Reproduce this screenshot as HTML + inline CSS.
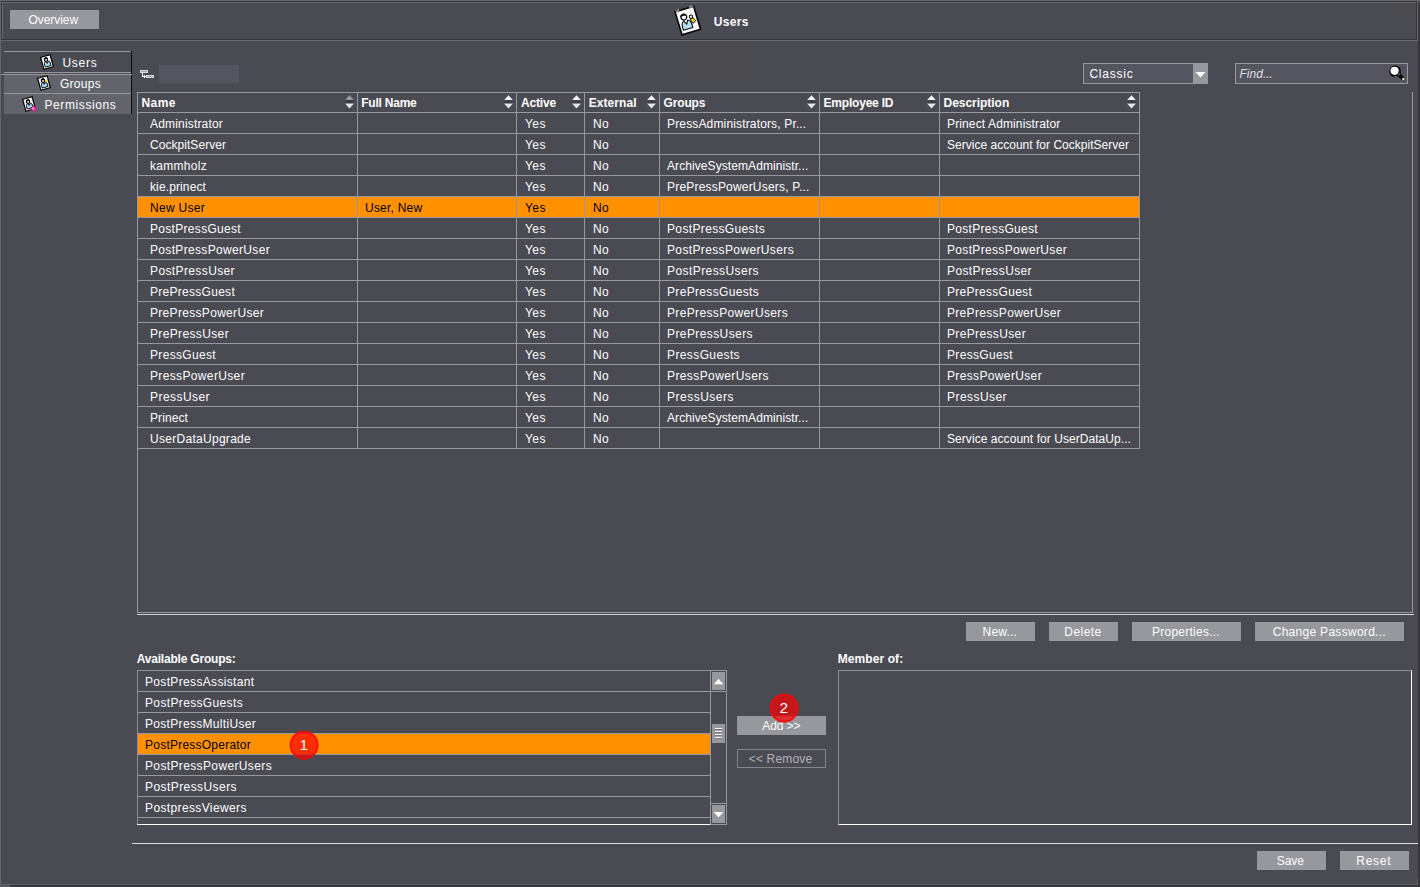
<!DOCTYPE html>
<html>
<head>
<meta charset="utf-8">
<title>Users</title>
<style>
html,body{margin:0;padding:0;}
body{width:1420px;height:887px;overflow:hidden;background:#4a4a53;font-family:"Liberation Sans",Arial,sans-serif;font-size:12px;color:#fff;position:relative;}
.a{position:absolute;}
.t{position:absolute;white-space:nowrap;line-height:14px;height:14px;}
.b{font-weight:bold;}
.btn{position:absolute;background:#96989d;height:19px;}
.hl{position:absolute;height:1px;background:#98999f;}
.vl{position:absolute;width:1px;background:#98999f;}
.sel{position:absolute;background:#ff9100;}
.k{color:#000;}
</style>
</head>
<body>

<div class="a" style="left:0;top:0;width:1420px;height:1px;background:#68686f"></div>
<div class="a" style="left:0;top:0;width:1px;height:887px;background:#66666e"></div>
<div class="a" style="left:1418px;top:3px;width:2px;height:884px;background:#36363b"></div>
<div class="a" style="left:0;top:884px;width:1418px;height:1px;background:#606069"></div>
<div class="a" style="left:1417px;top:879px;width:1px;height:6px;background:#606069"></div>
<div class="a" style="left:0;top:885px;width:10px;height:2px;background:#5a5a62"></div>
<div class="a" style="left:10px;top:885px;width:1410px;height:1px;background:#333338"></div>
<div class="a" style="left:10px;top:886px;width:1410px;height:1px;background:#3a3a3e"></div>
<div class="a" style="left:1px;top:1px;width:1416px;height:39px;border:1px solid #333338;box-sizing:border-box;"></div>
<div class="a" style="left:2px;top:2px;width:1414px;height:37px;border-left:1px solid #696973;border-top:1px solid #696973;box-sizing:border-box;"></div>
<div class="a" style="left:1417px;top:1px;width:1px;height:40px;background:#696973"></div>
<div class="a" style="left:0;top:40px;width:1418px;height:1px;background:#696973"></div>
<div class="a" style="left:1391px;top:3px;width:25px;height:14px;background:#4b4b4d"></div>
<div class="a" style="left:687px;top:41px;width:63px;height:40px;background:#4b4b4f"></div>
<div class="btn" style="left:10px;top:10px;width:89px;height:19px;"><span class="t" style="left:18.53px;top:3px;letter-spacing:-0.067px;">Overview</span></div>
<svg class="a" style="left:670px;top:3px" width="36" height="36" viewBox="0 0 36 36">
 <g transform="translate(17.8 17.6) rotate(-16.9)">
  <rect x="-9.7" y="-12" width="19.4" height="24" fill="#fff" stroke="#0a0a0a" stroke-width="1.7"/>
  <path d="M-8.4 -11.2 v-2 h2.8 v2 M5.6 -11.2 v-2 h2.8 v2" fill="#fff" stroke="#fff" stroke-width=".4"/>
  <path d="M-7.7 -11 v-2.6 M-6.3 -11 v-2.6 M6.3 -11 v-2.6 M7.7 -11 v-2.6" stroke="#0a0a0a" stroke-width=".7"/>
  <path d="M-6.8 8 q-.9 -8.2 3 -8.4 l1.8 3.4 l1.8 -3.4 q3.8 .2 3 8.4 z" fill="#b2dff5" stroke="#0a0a0a" stroke-width="1.1" stroke-linejoin="round"/>
  <circle cx="-2.8" cy="-4.5" r="2.9" fill="#fff" stroke="#0a0a0a" stroke-width="1.3"/>
  <path d="M-6 -5.2 a3.3 3.3 0 0 1 6.4 0 q-3.2 -1.6 -6.4 0 z" fill="#0a0a0a"/>
  <path d="M2.7 -.6 l3.2 -.6 l1.6 3.6 l-3 1.8 z" fill="#f5d800" stroke="#0a0a0a" stroke-width=".9" stroke-linejoin="round"/>
  <circle cx="4.2" cy="-2.8" r="1.7" fill="#fff" stroke="#0a0a0a" stroke-width="1"/>
 </g>
</svg>
<div class="t b" style="left:713.68px;top:15px;letter-spacing:0.364px;">Users</div>
<div class="hl" style="left:4px;top:51px;width:127px;"></div>
<div class="hl" style="left:4px;top:72px;width:127px;"></div>
<div class="a" style="left:4px;top:75px;width:127px;height:39px;background:#63636c;"></div>
<div class="hl" style="left:4px;top:93px;width:127px;"></div>
<div class="a" style="left:131px;top:51px;width:1px;height:63px;background:#0c0c0e;"></div>
<div class="hl" style="left:1px;top:74px;width:131px;"></div>
<svg class="a" style="left:38px;top:53px" width="18" height="18" viewBox="-9 -9 18 18">
 <g transform="rotate(-15.5)">
  <rect x="-4.9" y="-6.2" width="9.8" height="12.4" fill="#fff" stroke="#0a0a0a" stroke-width="1.3"/>
  <path d="M-3 4.4 q-.4 -5 1.6 -5 l1.4 2 l1.4 -2 q2 0 1.6 5 z" fill="#a6dcf4" stroke="#0a0a0a" stroke-width=".9"/>
  <circle cx="-0.4" cy="-2.5" r="1.7" fill="#fff" stroke="#0a0a0a" stroke-width="1.2"/>
  <path d="M-2.3 -3 a1.9 1.9 0 0 1 3.8 0 z" fill="#0a0a0a"/>
  
 </g>
</svg>
<svg class="a" style="left:35px;top:74px" width="18" height="18" viewBox="-9 -9 18 18">
 <g transform="rotate(-15.5)">
  <rect x="-4.9" y="-6.2" width="9.8" height="12.4" fill="#fff" stroke="#0a0a0a" stroke-width="1.3"/>
  <path d="M-3 4.4 q-.4 -5 1.6 -5 l1.4 2 l1.4 -2 q2 0 1.6 5 z" fill="#a6dcf4" stroke="#0a0a0a" stroke-width=".9"/>
  <circle cx="-0.4" cy="-2.5" r="1.7" fill="#fff" stroke="#0a0a0a" stroke-width="1.2"/>
  <path d="M-2.3 -3 a1.9 1.9 0 0 1 3.8 0 z" fill="#0a0a0a"/>
  <circle cx="3" cy="-1.4" r="1.1" fill="#f5d800"/>
 </g>
</svg>
<svg class="a" style="left:20px;top:95px" width="18" height="18" viewBox="-9 -9 18 18">
 <g transform="rotate(-15.5)">
  <rect x="-4.9" y="-6.2" width="9.8" height="12.4" fill="#fff" stroke="#0a0a0a" stroke-width="1.3"/>
  <path d="M-3 4.4 q-.4 -5 1.6 -5 l1.4 2 l1.4 -2 q2 0 1.6 5 z" fill="#a6dcf4" stroke="#0a0a0a" stroke-width=".9"/>
  <circle cx="-0.4" cy="-2.5" r="1.7" fill="#fff" stroke="#0a0a0a" stroke-width="1.2"/>
  <path d="M-2.3 -3 a1.9 1.9 0 0 1 3.8 0 z" fill="#0a0a0a"/>
  
 </g>
</svg>
<svg class="a" style="left:30px;top:105px" width="8" height="8" viewBox="0 0 8 8"><circle cx="3.6" cy="3.7" r="2.5" fill="#e832a0" stroke="#b01878" stroke-width=".6"/><circle cx="3.2" cy="3.4" r="1" fill="#f8b0d8"/></svg>
<div class="t" style="left:62.47px;top:56px;letter-spacing:0.731px;">Users</div>
<div class="t" style="left:59.9px;top:77px;letter-spacing:0.297px;">Groups</div>
<div class="t" style="left:44.42px;top:98px;letter-spacing:0.607px;">Permissions</div>
<div class="a" style="left:159px;top:65px;width:80px;height:18px;background:#55555f;"></div>
<svg class="a" style="left:140px;top:70px" width="15" height="9" viewBox="0 0 15 9" shape-rendering="crispEdges">
 <rect x="0" y="0" width="8" height="3" fill="#d8d9dd"/><rect x="1" y="1" width="6" height="1" fill="#a9a9ae"/>
 <rect x="6" y="5" width="8" height="3" fill="#d8d9dd"/><rect x="7" y="6" width="6" height="1" fill="#a9a9ae"/>
 <rect x="2" y="3" width="1" height="4" fill="#fff"/><rect x="2" y="6" width="4" height="1" fill="#fff"/><rect x="4" y="5" width="1" height="3" fill="#fff"/>
</svg>
<div class="a" style="left:1083px;top:63px;width:125px;height:21px;border:1px solid #98999f;box-sizing:border-box;background:#55555f;"></div>
<div class="t" style="left:1089.39px;top:67px;letter-spacing:0.792px;">Classic</div>
<div class="a" style="left:1193px;top:64px;width:15px;height:20px;background:#96989d;"></div>
<svg class="a" style="left:1195px;top:71px" width="11" height="7" viewBox="0 0 11 7"><path d="M0.5 1 H10.5 L5.5 6.4 Z" fill="#fff"/></svg>
<div class="a" style="left:1235px;top:63px;width:173px;height:21px;border:1px solid #98999f;box-sizing:border-box;background:#55555f;"></div>
<div class="t" style="left:1239.53px;top:67px;letter-spacing:0.016px;font-style:italic;color:#dedee0;">Find...</div>
<svg class="a" style="left:1388px;top:64px" width="18" height="18" viewBox="0 0 18 18">
 <path d="M10.6 10.8 L14.6 14.2" stroke="#000" stroke-width="3.6" stroke-linecap="round"/>
 <circle cx="7.2" cy="7.4" r="5.8" fill="#000"/>
 <path d="M6.6 12.4 a5 5 0 0 0 5.6 -5" stroke="#5e97ad" stroke-width="1.1" fill="none" stroke-dasharray="2.2 1.6"/>
 <circle cx="6.6" cy="6.85" r="4.1" fill="#fff"/>
 <circle cx="15.3" cy="14.9" r="1.1" fill="#fff"/>
</svg>
<div class="vl" style="left:1412px;top:92px;height:521px;"></div>
<div class="vl" style="left:137px;top:448px;height:165px;"></div>
<div class="hl" style="left:137px;top:612px;width:1276px;"></div>
<div class="hl" style="left:137px;top:614px;width:1277px;background:#d4d4d8;"></div>
<div class="sel" style="left:138px;top:197px;width:1001px;height:20px;"></div>
<div class="t b" style="left:141.5px;top:96px;letter-spacing:0.41px;">Name</div>
<svg class="a" style="left:345px;top:95px" width="9" height="14" viewBox="0 0 9 14"><path d="M0 5.3 L4.5 0.3 L9 5.3 Z" fill="#9a9aa0"/><path d="M0.2 5.75 H8.8" stroke="#2a2a30" stroke-width="1"/><path d="M0.2 8 H8.8" stroke="#2a2a30" stroke-width="1"/><path d="M0 8.5 L4.5 13.6 L9 8.5 Z" fill="#e4e6f2"/></svg>
<div class="t b" style="left:361.2px;top:96px;letter-spacing:-0.217px;">Full Name</div>
<svg class="a" style="left:504px;top:95px" width="9" height="14" viewBox="0 0 9 14"><path d="M0 5.3 L4.5 0.3 L9 5.3 Z" fill="#f4f4f8"/><path d="M0.2 5.75 H8.8" stroke="#2a2a30" stroke-width="1"/><path d="M0.2 8 H8.8" stroke="#2a2a30" stroke-width="1"/><path d="M0 8.5 L4.5 13.6 L9 8.5 Z" fill="#e4e6f2"/></svg>
<div class="t b" style="left:520.95px;top:96px;letter-spacing:-0.162px;">Active</div>
<svg class="a" style="left:572px;top:95px" width="9" height="14" viewBox="0 0 9 14"><path d="M0 5.3 L4.5 0.3 L9 5.3 Z" fill="#f4f4f8"/><path d="M0.2 5.75 H8.8" stroke="#2a2a30" stroke-width="1"/><path d="M0.2 8 H8.8" stroke="#2a2a30" stroke-width="1"/><path d="M0 8.5 L4.5 13.6 L9 8.5 Z" fill="#e4e6f2"/></svg>
<div class="t b" style="left:588.7px;top:96px;letter-spacing:0.071px;">External</div>
<svg class="a" style="left:647px;top:95px" width="9" height="14" viewBox="0 0 9 14"><path d="M0 5.3 L4.5 0.3 L9 5.3 Z" fill="#f4f4f8"/><path d="M0.2 5.75 H8.8" stroke="#2a2a30" stroke-width="1"/><path d="M0.2 8 H8.8" stroke="#2a2a30" stroke-width="1"/><path d="M0 8.5 L4.5 13.6 L9 8.5 Z" fill="#e4e6f2"/></svg>
<div class="t b" style="left:663.51px;top:96px;letter-spacing:-0.137px;">Groups</div>
<svg class="a" style="left:807px;top:95px" width="9" height="14" viewBox="0 0 9 14"><path d="M0 5.3 L4.5 0.3 L9 5.3 Z" fill="#f4f4f8"/><path d="M0.2 5.75 H8.8" stroke="#2a2a30" stroke-width="1"/><path d="M0.2 8 H8.8" stroke="#2a2a30" stroke-width="1"/><path d="M0 8.5 L4.5 13.6 L9 8.5 Z" fill="#e4e6f2"/></svg>
<div class="t b" style="left:823.5px;top:96px;letter-spacing:-0.202px;">Employee ID</div>
<svg class="a" style="left:927px;top:95px" width="9" height="14" viewBox="0 0 9 14"><path d="M0 5.3 L4.5 0.3 L9 5.3 Z" fill="#f4f4f8"/><path d="M0.2 5.75 H8.8" stroke="#2a2a30" stroke-width="1"/><path d="M0.2 8 H8.8" stroke="#2a2a30" stroke-width="1"/><path d="M0 8.5 L4.5 13.6 L9 8.5 Z" fill="#e4e6f2"/></svg>
<div class="t b" style="left:943.5px;top:96px;letter-spacing:-0.026px;">Description</div>
<svg class="a" style="left:1127px;top:95px" width="9" height="14" viewBox="0 0 9 14"><path d="M0 5.3 L4.5 0.3 L9 5.3 Z" fill="#f4f4f8"/><path d="M0.2 5.75 H8.8" stroke="#2a2a30" stroke-width="1"/><path d="M0.2 8 H8.8" stroke="#2a2a30" stroke-width="1"/><path d="M0 8.5 L4.5 13.6 L9 8.5 Z" fill="#e4e6f2"/></svg>
<div class="t" style="left:150px;top:117px;letter-spacing:0.178px;">Administrator</div>
<div class="t" style="left:525px;top:117px;letter-spacing:0.441px;">Yes</div>
<div class="t" style="left:593px;top:117px;letter-spacing:0.33px;">No</div>
<div class="t" style="left:667px;top:117px;letter-spacing:0.153px;">PressAdministrators, Pr...</div>
<div class="t" style="left:947px;top:117px;letter-spacing:0.125px;">Prinect Administrator</div>
<div class="t" style="left:150px;top:138px;letter-spacing:0.049px;">CockpitServer</div>
<div class="t" style="left:525px;top:138px;letter-spacing:0.441px;">Yes</div>
<div class="t" style="left:593px;top:138px;letter-spacing:0.33px;">No</div>
<div class="t" style="left:947px;top:138px;letter-spacing:0.018px;">Service account for CockpitServer</div>
<div class="t" style="left:150px;top:159px;letter-spacing:0.29px;">kammholz</div>
<div class="t" style="left:525px;top:159px;letter-spacing:0.441px;">Yes</div>
<div class="t" style="left:593px;top:159px;letter-spacing:0.33px;">No</div>
<div class="t" style="left:667px;top:159px;letter-spacing:0.079px;">ArchiveSystemAdministr...</div>
<div class="t" style="left:150px;top:180px;letter-spacing:0.119px;">kie.prinect</div>
<div class="t" style="left:525px;top:180px;letter-spacing:0.441px;">Yes</div>
<div class="t" style="left:593px;top:180px;letter-spacing:0.33px;">No</div>
<div class="t" style="left:667px;top:180px;letter-spacing:0.193px;">PrePressPowerUsers, P...</div>
<div class="t k" style="left:150px;top:201px;letter-spacing:0.291px;">New User</div>
<div class="t k" style="left:365px;top:201px;letter-spacing:0.221px;">User, New</div>
<div class="t k" style="left:525px;top:201px;letter-spacing:0.441px;">Yes</div>
<div class="t k" style="left:593px;top:201px;letter-spacing:0.33px;">No</div>
<div class="t" style="left:150px;top:222px;letter-spacing:0.307px;">PostPressGuest</div>
<div class="t" style="left:525px;top:222px;letter-spacing:0.441px;">Yes</div>
<div class="t" style="left:593px;top:222px;letter-spacing:0.33px;">No</div>
<div class="t" style="left:667px;top:222px;letter-spacing:0.353px;">PostPressGuests</div>
<div class="t" style="left:947px;top:222px;letter-spacing:0.307px;">PostPressGuest</div>
<div class="t" style="left:150px;top:243px;letter-spacing:0.331px;">PostPressPowerUser</div>
<div class="t" style="left:525px;top:243px;letter-spacing:0.441px;">Yes</div>
<div class="t" style="left:593px;top:243px;letter-spacing:0.33px;">No</div>
<div class="t" style="left:667px;top:243px;letter-spacing:0.367px;">PostPressPowerUsers</div>
<div class="t" style="left:947px;top:243px;letter-spacing:0.331px;">PostPressPowerUser</div>
<div class="t" style="left:150px;top:264px;letter-spacing:0.383px;">PostPressUser</div>
<div class="t" style="left:525px;top:264px;letter-spacing:0.441px;">Yes</div>
<div class="t" style="left:593px;top:264px;letter-spacing:0.33px;">No</div>
<div class="t" style="left:667px;top:264px;letter-spacing:0.427px;">PostPressUsers</div>
<div class="t" style="left:947px;top:264px;letter-spacing:0.383px;">PostPressUser</div>
<div class="t" style="left:150px;top:285px;letter-spacing:0.28px;">PrePressGuest</div>
<div class="t" style="left:525px;top:285px;letter-spacing:0.441px;">Yes</div>
<div class="t" style="left:593px;top:285px;letter-spacing:0.33px;">No</div>
<div class="t" style="left:667px;top:285px;letter-spacing:0.331px;">PrePressGuests</div>
<div class="t" style="left:947px;top:285px;letter-spacing:0.28px;">PrePressGuest</div>
<div class="t" style="left:150px;top:306px;letter-spacing:0.312px;">PrePressPowerUser</div>
<div class="t" style="left:525px;top:306px;letter-spacing:0.441px;">Yes</div>
<div class="t" style="left:593px;top:306px;letter-spacing:0.33px;">No</div>
<div class="t" style="left:667px;top:306px;letter-spacing:0.35px;">PrePressPowerUsers</div>
<div class="t" style="left:947px;top:306px;letter-spacing:0.312px;">PrePressPowerUser</div>
<div class="t" style="left:150px;top:327px;letter-spacing:0.36px;">PrePressUser</div>
<div class="t" style="left:525px;top:327px;letter-spacing:0.441px;">Yes</div>
<div class="t" style="left:593px;top:327px;letter-spacing:0.33px;">No</div>
<div class="t" style="left:667px;top:327px;letter-spacing:0.409px;">PrePressUsers</div>
<div class="t" style="left:947px;top:327px;letter-spacing:0.36px;">PrePressUser</div>
<div class="t" style="left:150px;top:348px;letter-spacing:0.331px;">PressGuest</div>
<div class="t" style="left:525px;top:348px;letter-spacing:0.441px;">Yes</div>
<div class="t" style="left:593px;top:348px;letter-spacing:0.33px;">No</div>
<div class="t" style="left:667px;top:348px;letter-spacing:0.392px;">PressGuests</div>
<div class="t" style="left:947px;top:348px;letter-spacing:0.331px;">PressGuest</div>
<div class="t" style="left:150px;top:369px;letter-spacing:0.355px;">PressPowerUser</div>
<div class="t" style="left:525px;top:369px;letter-spacing:0.441px;">Yes</div>
<div class="t" style="left:593px;top:369px;letter-spacing:0.33px;">No</div>
<div class="t" style="left:667px;top:369px;letter-spacing:0.398px;">PressPowerUsers</div>
<div class="t" style="left:947px;top:369px;letter-spacing:0.355px;">PressPowerUser</div>
<div class="t" style="left:150px;top:390px;letter-spacing:0.443px;">PressUser</div>
<div class="t" style="left:525px;top:390px;letter-spacing:0.441px;">Yes</div>
<div class="t" style="left:593px;top:390px;letter-spacing:0.33px;">No</div>
<div class="t" style="left:667px;top:390px;letter-spacing:0.499px;">PressUsers</div>
<div class="t" style="left:947px;top:390px;letter-spacing:0.443px;">PressUser</div>
<div class="t" style="left:150px;top:411px;letter-spacing:0.093px;">Prinect</div>
<div class="t" style="left:525px;top:411px;letter-spacing:0.441px;">Yes</div>
<div class="t" style="left:593px;top:411px;letter-spacing:0.33px;">No</div>
<div class="t" style="left:667px;top:411px;letter-spacing:0.079px;">ArchiveSystemAdministr...</div>
<div class="t" style="left:150px;top:432px;letter-spacing:0.286px;">UserDataUpgrade</div>
<div class="t" style="left:525px;top:432px;letter-spacing:0.441px;">Yes</div>
<div class="t" style="left:593px;top:432px;letter-spacing:0.33px;">No</div>
<div class="t" style="left:947px;top:432px;letter-spacing:0.058px;">Service account for UserDataUp...</div>
<div class="hl" style="left:137px;top:92px;width:1003px"></div>
<div class="hl" style="left:137px;top:112px;width:1003px"></div>
<div class="hl" style="left:137px;top:133px;width:1003px"></div>
<div class="hl" style="left:137px;top:154px;width:1003px"></div>
<div class="hl" style="left:137px;top:175px;width:1003px"></div>
<div class="hl" style="left:137px;top:196px;width:1003px"></div>
<div class="hl" style="left:137px;top:217px;width:1003px"></div>
<div class="hl" style="left:137px;top:238px;width:1003px"></div>
<div class="hl" style="left:137px;top:259px;width:1003px"></div>
<div class="hl" style="left:137px;top:280px;width:1003px"></div>
<div class="hl" style="left:137px;top:301px;width:1003px"></div>
<div class="hl" style="left:137px;top:322px;width:1003px"></div>
<div class="hl" style="left:137px;top:343px;width:1003px"></div>
<div class="hl" style="left:137px;top:364px;width:1003px"></div>
<div class="hl" style="left:137px;top:385px;width:1003px"></div>
<div class="hl" style="left:137px;top:406px;width:1003px"></div>
<div class="hl" style="left:137px;top:427px;width:1003px"></div>
<div class="hl" style="left:137px;top:448px;width:1003px"></div>
<div class="vl" style="left:137px;top:92px;height:357px"></div>
<div class="vl" style="left:357px;top:92px;height:357px"></div>
<div class="vl" style="left:516px;top:92px;height:357px"></div>
<div class="vl" style="left:584px;top:92px;height:357px"></div>
<div class="vl" style="left:659px;top:92px;height:357px"></div>
<div class="vl" style="left:819px;top:92px;height:357px"></div>
<div class="vl" style="left:939px;top:92px;height:357px"></div>
<div class="vl" style="left:1139px;top:92px;height:357px"></div>
<div class="btn" style="left:966px;top:622px;width:69px;height:19px;"><span class="t" style="left:16.52px;top:3px;letter-spacing:0.214px;">New...</span></div>
<div class="btn" style="left:1049px;top:622px;width:69px;height:19px;"><span class="t" style="left:15.32px;top:3px;letter-spacing:0.446px;">Delete</span></div>
<div class="btn" style="left:1132px;top:622px;width:109px;height:19px;"><span class="t" style="left:20.02px;top:3px;letter-spacing:0.249px;">Properties...</span></div>
<div class="btn" style="left:1255px;top:622px;width:149px;height:19px;"><span class="t" style="left:17.69px;top:3px;letter-spacing:0.291px;">Change Password...</span></div>
<div class="t b" style="left:136.7px;top:652px;letter-spacing:-0.196px;">Available Groups:</div>
<div class="t b" style="left:837.7px;top:652px;letter-spacing:0.087px;">Member of:</div>
<div class="a" style="left:137px;top:670px;width:590px;height:155px;border:1px solid #98999f;border-left-color:#8d919e;box-sizing:border-box;"></div>
<div class="hl" style="left:137px;top:670px;width:573px;background:#8d919e"></div>
<div class="hl" style="left:137px;top:824px;width:574px;background:#fff"></div>
<div class="sel" style="left:138px;top:734px;width:572px;height:20px;"></div>
<div class="t" style="left:145px;top:675px;letter-spacing:0.34px;">PostPressAssistant</div>
<div class="hl" style="left:138px;top:691px;width:589px"></div>
<div class="t" style="left:145px;top:696px;letter-spacing:0.353px;">PostPressGuests</div>
<div class="hl" style="left:138px;top:712px;width:572px"></div>
<div class="t" style="left:145px;top:717px;letter-spacing:0.313px;">PostPressMultiUser</div>
<div class="hl" style="left:138px;top:733px;width:572px"></div>
<div class="t k" style="left:145px;top:738px;letter-spacing:0.233px;">PostPressOperator</div>
<div class="hl" style="left:138px;top:754px;width:572px"></div>
<div class="t" style="left:145px;top:759px;letter-spacing:0.367px;">PostPressPowerUsers</div>
<div class="hl" style="left:138px;top:775px;width:572px"></div>
<div class="t" style="left:145px;top:780px;letter-spacing:0.427px;">PostPressUsers</div>
<div class="hl" style="left:138px;top:796px;width:572px"></div>
<div class="t" style="left:145px;top:801px;letter-spacing:0.373px;">PostpressViewers</div>
<div class="hl" style="left:138px;top:817px;width:572px"></div>
<div class="vl" style="left:710px;top:670px;height:155px;"></div>
<div class="hl" style="left:710px;top:803px;width:16px;"></div>
<div class="a" style="left:712px;top:672px;width:13px;height:18px;background:#96989d;"></div>
<div class="a" style="left:712px;top:805px;width:13px;height:18px;background:#96989d;"></div>
<div class="a" style="left:712px;top:724px;width:13px;height:19px;background:#96989d;"></div>
<svg class="a" style="left:712px;top:672px" width="13" height="18" viewBox="0 0 13 18"><path d="M1.8 12.2 H11.2 L6.5 6.8 Z" fill="#fff"/></svg>
<svg class="a" style="left:712px;top:805px" width="13" height="18" viewBox="0 0 13 18"><path d="M1.8 7 H11.2 L6.5 12.4 Z" fill="#fff"/></svg>
<svg class="a" style="left:712px;top:724px" width="13" height="19" viewBox="0 0 13 19"><path d="M3 4.5H10M3 7.5H10M3 10.5H10M3 13.5H10" stroke="#fff" stroke-width="1"/><path d="M3 5.5H10M3 8.5H10M3 11.5H10M3 14.5H10" stroke="#727889" stroke-width="1"/></svg>
<div class="btn" style="left:737px;top:716px;width:89px;height:19px;"><span class="t" style="left:25.28px;top:3px;letter-spacing:-0.098px;">Add &gt;&gt;</span></div>
<div class="a" style="left:737px;top:749px;width:89px;height:19px;border:1px solid #85858c;box-sizing:border-box;"></div>
<div class="t" style="left:748.71px;top:752px;letter-spacing:0.174px;color:#b2b2b6;">&lt;&lt; Remove</div>
<div class="a" style="left:838px;top:670px;width:574px;height:155px;border:1px solid #8d919e;border-right-color:#fff;border-bottom-color:#fff;box-sizing:border-box;"></div>
<svg class="a" style="left:288px;top:729px" width="32" height="32" viewBox="0 0 32 32"><circle cx="16.1" cy="16.2" r="14.35" fill="rgba(250,0,0,.69)"/><circle cx="16.1" cy="16.2" r="13.5" fill="none" stroke="rgba(248,8,8,.8)" stroke-width="1.7"/></svg>
<div class="a" style="left:293.8px;top:735.8px;width:20px;height:18px;line-height:18px;text-align:center;font-size:15.5px;color:#fff;">1</div>
<svg class="a" style="left:768px;top:692px" width="32" height="32" viewBox="0 0 32 32"><circle cx="16.15" cy="16.05" r="14.35" fill="rgba(250,0,0,.69)"/><circle cx="16.15" cy="16.05" r="13.5" fill="none" stroke="rgba(248,8,8,.8)" stroke-width="1.7"/></svg>
<div class="a" style="left:773.85px;top:698.65px;width:20px;height:18px;line-height:18px;text-align:center;font-size:15.5px;color:#fff;">2</div>
<div class="hl" style="left:132px;top:843px;width:1286px;background:#dcdcde;"></div>
<div class="btn" style="left:1257px;top:851px;width:69px;height:19px;"><span class="t" style="left:19.86px;top:3px;letter-spacing:-0.091px;">Save</span></div>
<div class="btn" style="left:1340px;top:851px;width:69px;height:19px;"><span class="t" style="left:16.32px;top:3px;letter-spacing:0.731px;">Reset</span></div>
</body>
</html>
